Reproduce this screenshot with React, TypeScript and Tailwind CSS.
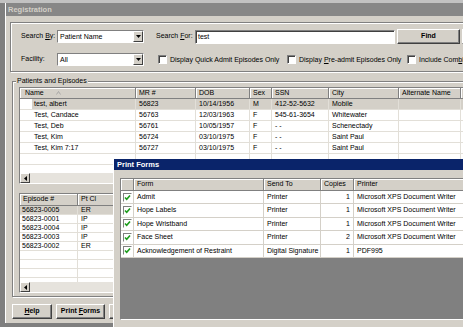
import { ReactNode } from "react";

type Row = string[];

const patients: Row[] = [
  ["test, albert", "56823", "10/14/1956", "M", "412-52-5632", "Mobile"],
  ["Test, Candace", "56763", "12/03/1963", "F", "545-61-3654", "Whitewater"],
  ["Test, Deb", "56761", "10/05/1957", "F", "- -", "Schenectady"],
  ["Test, Kim", "56724", "03/10/1975", "F", "- -", "Saint Paul"],
  ["Test, Kim 7:17", "56727", "03/10/1975", "F", "- -", "Saint Paul"],
];

const episodes: Row[] = [
  ["56823-0005", "ER"],
  ["56823-0001", "IP"],
  ["56823-0004", "IP"],
  ["56823-0003", "IP"],
  ["56823-0002", "ER"],
];

const forms: Row[] = [
  ["Admit", "Printer", "1", "Microsoft XPS Document Writer"],
  ["Hope Labels", "Printer", "1", "Microsoft XPS Document Writer"],
  ["Hope Wristband", "Printer", "1", "Microsoft XPS Document Writer"],
  ["Face Sheet", "Printer", "2", "Microsoft XPS Document Writer"],
  ["Acknowledgement of Restraint", "Digital Signature", "1", "PDF995"],
];

function U({ children }: { children: ReactNode }) {
  return <span className="underline">{children}</span>;
}

function Select({ value }: { value: string }) {
  return (
    <div className="flex h-[13px] w-[87px] shrink-0 items-center border border-t-[#808080] border-l-[#808080] border-b-white border-r-white bg-white">
      <span className="flex-1 pl-[2px] leading-[11px]">{value}</span>
      <div className="flex h-[11px] w-[10px] items-center justify-center border border-t-white border-l-white border-b-[#404040] border-r-[#404040] bg-[#d4d0c8]">
        <svg width="5" height="3" viewBox="0 0 5 3">
          <path d="M0 0h5L2.5 3z" fill="#000" />
        </svg>
      </div>
    </div>
  );
}

function Check({ label }: { label: ReactNode }) {
  return (
    <div className="flex items-center gap-[3px]">
      <div className="h-[9px] w-[9px] shrink-0 border border-t-[#808080] border-l-[#808080] border-b-white border-r-white bg-white shadow-[inset_1px_1px_0_#404040]" />
      <span className="leading-[11px]">{label}</span>
    </div>
  );
}

function Button({ children, w }: { children: ReactNode; w: string }) {
  return (
    <div
      className={`flex h-[15px] shrink-0 ${w} items-center justify-center border border-t-white border-l-white border-b-[#404040] border-r-[#404040] bg-[#d4d0c8] font-bold shadow-[inset_-1px_-1px_0_#808080]`}
    >
      {children}
    </div>
  );
}

function HeadCell({ children, className = "" }: { children?: ReactNode; className?: string }) {
  return (
    <div
      className={`flex items-center overflow-hidden border-r border-b border-r-[#808080] border-b-[#808080] bg-[#d4d0c8] pl-[3px] shadow-[inset_1px_1px_0_#fff] ${className}`}
    >
      {children}
    </div>
  );
}

function HScroll() {
  return (
    <div className="flex h-[10px] shrink-0 bg-[#e6e3dd]">
      <div className="flex h-[10px] w-[10px] items-center justify-center border border-t-white border-l-white border-b-[#404040] border-r-[#404040] bg-[#d4d0c8]">
        <svg width="3" height="5" viewBox="0 0 3 5">
          <path d="M3 0v5L0 2.5z" fill="#000" />
        </svg>
      </div>
    </div>
  );
}

function GreenCheck() {
  return (
    <div className="flex h-[9px] w-[9px] items-center justify-center border border-t-[#808080] border-l-[#808080] border-b-white border-r-white bg-white">
      <svg width="7" height="7" viewBox="0 0 7 7">
        <path d="M1 3.5l1.7 1.8L6 1.5" fill="none" stroke="#1c9c1c" strokeWidth="1.6" />
      </svg>
    </div>
  );
}

const patientCols = "grid-cols-[116px_60px_54px_22px_57px_70px_62px_60px]";

export default function App() {
  return (
    <div className="relative h-[327px] w-[463px] overflow-hidden whitespace-nowrap bg-[#7f7f7f] font-['Liberation_Sans',Arial,sans-serif] text-[7px] text-black">
      <div className="h-[3px] bg-[#c2c2c2]" />
      <div className="ml-[5px] flex h-[320px] w-[540px] flex-col border-l border-l-white bg-[#d4d0c8]">
        {/* title */}
        <div className="flex h-[13px] shrink-0 items-center bg-[#878787] pl-[2px] text-[7.5px] font-bold text-[#d4d0c8]">
          Registration
        </div>

        {/* search group */}
        <div className="ml-[4px] mt-[6px] flex h-[50px] shrink-0 flex-col gap-[9px] border border-[#808080] pl-[10px] pt-[6px] shadow-[inset_1px_1px_0_#fff,1px_1px_0_#fff]">
          <div className="flex items-center">
            <span className="w-[36px] shrink-0">
              Search <U>B</U>y:
            </span>
            <Select value="Patient Name" />
            <span className="ml-[12px] w-[39px] shrink-0">
              Search <U>F</U>or:
            </span>
            <div className="h-[14px] w-[200px] shrink-0 border border-t-[#808080] border-l-[#808080] border-b-white border-r-white bg-white pl-[2px] leading-[12px] shadow-[inset_1px_1px_0_#404040]">
              test
            </div>
            <div className="ml-[2px]">
              <Button w="w-[63px]">Find</Button>
            </div>
            <div className="ml-[2px]">
              <Button w="w-[40px]"> </Button>
            </div>
          </div>
          <div className="flex items-center">
            <span className="w-[36px] shrink-0">Facility:</span>
            <Select value="All" />
            <div className="ml-[14px] w-[129px] shrink-0">
              <Check label="Display Quick Admit Episodes Only" />
            </div>
            <div className="w-[120px] shrink-0">
              <Check
                label={
                  <>
                    Display <U>P</U>re-admit Episodes Only
                  </>
                }
              />
            </div>
            <Check
              label={
                <>
                  Include Com<U>b</U>ined
                </>
              }
            />
          </div>
        </div>

        {/* patients and episodes group */}
        <div className="relative ml-[6px] mt-[9px] flex h-[216px] shrink-0 flex-col gap-[9px] border border-[#808080] pb-[4px] pl-[6px] pt-[5px] shadow-[inset_1px_1px_0_#fff,1px_1px_0_#fff]">
          <span className="absolute -top-[6px] left-[3px] bg-[#d4d0c8] px-[1px] leading-[10px]">
            Patients and Episodes
          </span>

          {/* patient table */}
          <div className="flex h-[97px] w-[470px] shrink-0 flex-col border border-t-[#808080] border-l-[#808080] border-b-white border-r-white bg-white">
            <div className={`grid h-[11px] shrink-0 ${patientCols}`}>
              <HeadCell className="pl-[5px]">
                Name
                <svg className="ml-[12px]" width="5" height="4" viewBox="0 0 5 4">
                  <path d="M0.5 3.5L2.5 0.5L4.5 3.5" fill="none" stroke="#a0a0a0" strokeWidth="0.8" />
                </svg>
              </HeadCell>
              <HeadCell>MR #</HeadCell>
              <HeadCell>DOB</HeadCell>
              <HeadCell>Sex</HeadCell>
              <HeadCell>SSN</HeadCell>
              <HeadCell>City</HeadCell>
              <HeadCell>Alternate Name</HeadCell>
              <HeadCell />
            </div>
            <div className="flex flex-1 flex-col overflow-hidden">
              {[...patients, ["", "", "", "", "", ""], ["", "", "", "", "", ""]].map((r, i) => (
                <div
                  key={i}
                  className={`grid h-[11px] shrink-0 ${patientCols} leading-[10px] ${i === 0 ? "bg-[#d4d0c8]" : ""}`}
                >
                  <div className="flex border-b border-r border-[#e2dfd8]">
                    <div className="w-[12px] bg-white" />
                    <span className="pl-[2px]">{r[0]}</span>
                  </div>
                  {r.slice(1).map((c, j) => (
                    <div key={j} className="border-b border-r border-[#e2dfd8] pl-[3px]">
                      {c}
                    </div>
                  ))}
                  <div className="border-b border-r border-[#e2dfd8]" />
                  <div className="border-b border-r border-[#e2dfd8]" />
                </div>
              ))}
            </div>
            <HScroll />
          </div>

          {/* episode table */}
          <div className="flex h-[100px] w-[120px] shrink-0 flex-col border border-t-[#808080] border-l-[#808080] border-b-white border-r-white bg-white">
            <div className="grid h-[12px] shrink-0 grid-cols-[58px_60px]">
              <HeadCell>Episode #</HeadCell>
              <HeadCell>Pt Cl</HeadCell>
            </div>
            <div className="flex flex-1 flex-col overflow-hidden">
              {[...episodes, ["", ""], ["", ""], ["", ""], ["", ""]].map((r, i) => (
                <div
                  key={i}
                  className={`grid h-[9px] shrink-0 grid-cols-[58px_60px] leading-[8px] ${i === 0 ? "bg-[#d4d0c8]" : ""}`}
                >
                  <div className="border-b border-r border-[#e2dfd8] pl-[2px]">{r[0]}</div>
                  <div className="border-b border-r border-[#e2dfd8] pl-[3px]">{r[1]}</div>
                </div>
              ))}
            </div>
            <HScroll />
          </div>
        </div>

        {/* bottom buttons */}
        <div className="ml-[6px] mt-[7px] flex gap-[4px]">
          <Button w="w-[40px]">
            <U>H</U>elp
          </Button>
          <Button w="w-[49px]">
            Print&nbsp;<U>F</U>orms
          </Button>
          <Button w="w-[40px]"> </Button>
        </div>
      </div>

      {/* Print Forms dialog */}
      <div className="absolute left-[113px] top-[159px] flex h-[180px] w-[360px] flex-col border-l border-l-white bg-[#d4d0c8]">
        <div className="flex h-[11px] shrink-0 items-center bg-[#0a246a] pl-[3px] text-[7.5px] font-bold text-white">
          Print Forms
        </div>
        <div className="ml-[6px] mt-[8px] flex h-[142px] shrink-0 flex-col border border-t-[#808080] border-l-[#808080] border-b-white border-r-white bg-[#808080]">
          <div className="grid h-[12px] shrink-0 grid-cols-[13px_130px_57px_33px_130px]">
            <HeadCell />
            <HeadCell>Form</HeadCell>
            <HeadCell>Send To</HeadCell>
            <HeadCell>Copies</HeadCell>
            <HeadCell>Printer</HeadCell>
          </div>
          {forms.map((r, i) => (
            <div
              key={i}
              className="grid h-[13.4px] shrink-0 grid-cols-[13px_130px_57px_33px_130px] bg-white leading-[12px]"
            >
              <div className="flex items-center justify-center border-b border-r border-[#d4d0c8]">
                <GreenCheck />
              </div>
              <div className="border-b border-r border-[#d4d0c8] pl-[3px]">{r[0]}</div>
              <div className="border-b border-r border-[#d4d0c8] pl-[3px]">{r[1]}</div>
              <div className="border-b border-r border-[#d4d0c8] pr-[3px] text-right">{r[2]}</div>
              <div className="border-b border-r border-[#d4d0c8] pl-[3px]">{r[3]}</div>
            </div>
          ))}
        </div>
      </div>
    </div>
  );
}
